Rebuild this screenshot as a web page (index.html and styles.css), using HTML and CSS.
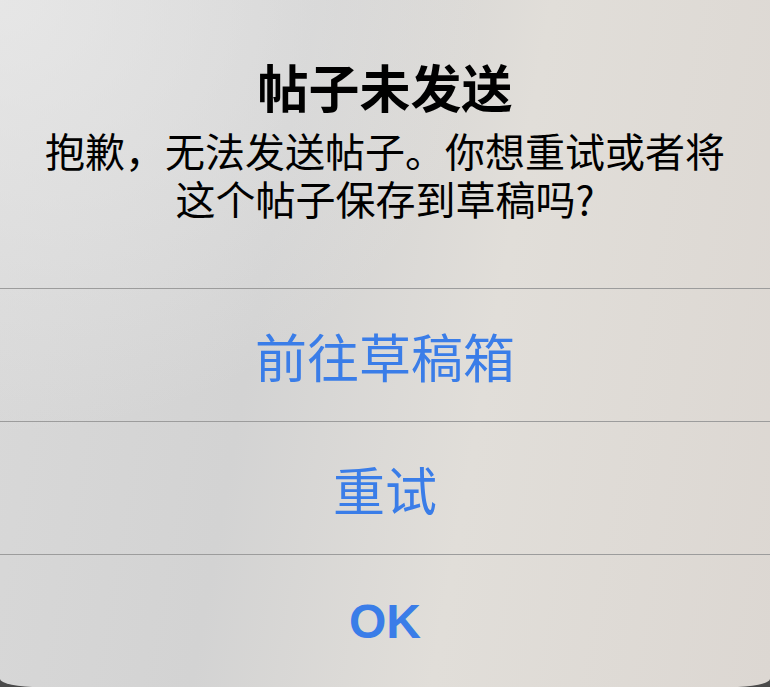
FILE: index.html
```html
<!DOCTYPE html>
<html lang="zh-CN">
<head>
<meta charset="UTF-8">
<meta name="viewport" content="width=device-width, initial-scale=1.0">
<title>帖子未发送</title>
<link rel="stylesheet" href="styles.css">
</head>
<body>
  <div class="alert">
    <div class="alert-head">
      <h1 class="alert-title">帖子未发送</h1>
      <p class="alert-msg">抱歉，无法发送帖子。你想重试或者将这个帖子保存到草稿吗?</p>
    </div>
    <!-- action buttons -->
    <div class="alert-btn">前往草稿箱</div>
    <div class="alert-btn">重试</div>
    <div class="alert-btn alert-btn-ok">OK</div>
  </div>
</body>
</html>
```

FILE: styles.css
```css
html, body {
  margin: 0;
  padding: 0;
  height: 100%;
}
body {
  background-color: #4a4a4a; /* shows through the rounded bottom corners */
  font-family: "Noto Sans CJK SC", "Noto Sans", sans-serif;
  overflow: hidden;
}
.alert {
  display: flex;
  flex-direction: column;
  height: 687px;
  border-radius: 0 0 40px 40px / 0 0 8px 8px;
  background:
    radial-gradient(ellipse at 0% 0%, rgba(236, 236, 236, 0.7), rgba(236, 236, 236, 0) 45%),
    linear-gradient(100deg, #d9d9d9 0%, #d3d3d3 35%, #e1ded9 62%, #dcd7d2 100%);
  color: #000;
}
.alert-head {
  height: 288px;
  box-sizing: border-box;
  padding: 58px 40px 0;
  text-align: center;
}
.alert-title {
  margin: 0;
  font-size: 51px;
  line-height: 56px;
  font-weight: 700;
}
.alert-msg {
  margin: 12px 0 0;
  font-size: 40px;
  line-height: 48px;
  font-weight: 400;
}
.alert-btn {
  height: 133px;
  box-sizing: border-box;
  border-top: 1px solid #9c9c9c;
  display: flex;
  align-items: center;
  justify-content: center;
  color: #3a7de8;
  font-size: 52px;
  cursor: pointer;
}
.alert-btn-ok {
  font-family: "Liberation Sans", Arial, sans-serif;
  font-weight: 700;
  font-size: 48px;
}
```
